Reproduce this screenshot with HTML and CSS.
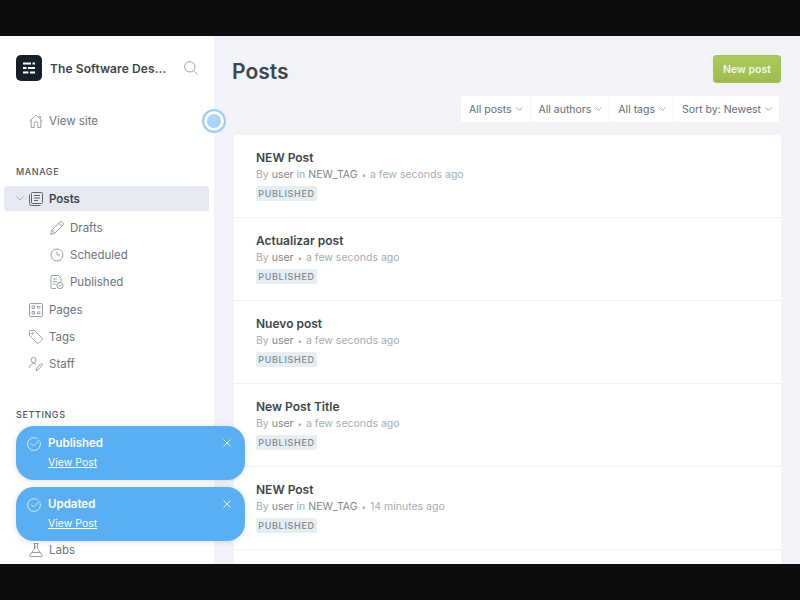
FILE: index.html
```html
<!DOCTYPE html>
<html lang="en">
<head>
    <meta charset="UTF-8">
    <title>Posts</title>
    <link rel="stylesheet" href="styles.css">
</head>
<body>
    <div class="app">
        <!-- Sidebar -->
        <aside class="sidebar">
            <div class="brand">
                <div class="logo">
                    <svg width="12" height="12" viewBox="0 0 12 12" fill="none" stroke="#fff" stroke-width="2">
                        <path d="M0 1.5h8M9.500 1.500H12M0 6h3.500M5 6h7M0 10.500h5.500M7 10.500h5"/>
                    </svg>
                </div>
                <span class="brand-name">The Software Des...</span>
                <svg class="search" width="14" height="14" viewBox="0 0 14 14" fill="none" stroke="#8e979e" stroke-width=".9">
                    <circle cx="5.800" cy="5.800" r="5.200"/>
                    <path d="M9.500 9.500l4 4"/>
                </svg>
            </div>

            <a class="nav-item view-site">
                <svg class="icon" width="14" height="14" viewBox="0 0 14 14" fill="none" stroke="#7d878f" stroke-width=".8">
                    <path d="M.5 7L7 1l6.500 6M2.200 6v7.500h3V9.500a1.800 1.800 0 0 1 3.600 0v4h3V6M10 2.500h1.500V4"/>
                </svg>
                View site
            </a>

            <h3 class="nav-title manage">Manage</h3>
            <a class="nav-item active">
                <svg class="caret" width="8" height="5" viewBox="0 0 8 5" fill="none" stroke="#9aa3aa" stroke-width=".8"><path d="M.5.500L4 4 7.500.500"/></svg>
                <svg class="icon" width="14" height="14" viewBox="0 0 14 14" fill="none" stroke="#4d565d" stroke-width=".9">
                    <rect x="2.500" y=".5" width="11" height="11" rx="1"/>
                    <path d="M5 3.500h6M5 6h6M5 8.500h4M.5 2.500v9a2 2 0 0 0 2 2h9"/>
                </svg>
                Posts
            </a>
            <a class="nav-item sub">
                <svg class="icon" width="14" height="14" viewBox="0 0 14 14" fill="none" stroke="#7d878f" stroke-width=".8">
                    <path d="M.7 13.300l1-4L10 1a1.500 1.500 0 0 1 2.200 0l.8.8a1.500 1.500 0 0 1 0 2.200l-8.300 8.300zM1.700 9.300l3 3M9 2.300l2.700 2.700"/>
                </svg>
                Drafts
            </a>
            <a class="nav-item sub">
                <svg class="icon" width="14" height="14" viewBox="0 0 14 14" fill="none" stroke="#7d878f" stroke-width=".8">
                    <circle cx="7" cy="7" r="6"/>
                    <path d="M7 3.500V7h3"/>
                </svg>
                Scheduled
            </a>
            <a class="nav-item sub">
                <svg class="icon" width="14" height="14" viewBox="0 0 14 14" fill="none" stroke="#7d878f" stroke-width=".8">
                    <path d="M6 13.500H2a1 1 0 0 1-1-1v-11a1 1 0 0 1 1-1h6.500L11 3v3.500"/>
                    <path d="M3 4h4M3 6.500h4M3 9h2.500"/>
                    <circle cx="10" cy="10.500" r="3.200"/>
                    <path d="M8.500 10.500l1.200 1 1.800-2"/>
                </svg>
                Published
            </a>
            <a class="nav-item">
                <svg class="icon" width="14" height="14" viewBox="0 0 14 14" fill="none" stroke="#7d878f" stroke-width=".8">
                    <rect x=".5" y=".5" width="13" height="13" rx="1"/>
                    <path d="M3 3h2.500v2.500H3zM3 8.500h2.500V11H3zM8 3.500h3.500M8 5h3.500M8 9h3.500M8 10.500h3.500"/>
                </svg>
                Pages
            </a>
            <a class="nav-item">
                <svg class="icon" width="14" height="14" viewBox="0 0 14 14" fill="none" stroke="#7d878f" stroke-width=".8">
                    <path d="M.5 1.500a1 1 0 0 1 1-1h4L13 8a1.200 1.200 0 0 1 0 1.700L9.700 13a1.200 1.200 0 0 1-1.700 0L.5 5.500z"/>
                    <circle cx="3.500" cy="3.500" r=".8"/>
                </svg>
                Tags
            </a>
            <a class="nav-item">
                <svg class="icon" width="14" height="14" viewBox="0 0 14 14" fill="none" stroke="#7d878f" stroke-width=".8">
                    <circle cx="4.500" cy="3" r="2.500"/>
                    <path d="M.5 11c0-2.500 1.700-4.500 4-4.500 1 0 1.800.3 2.500.8M7 13.500l.6-2.400 4.200-4.200a1 1 0 0 1 1.400 1.400L9 12.900z"/>
                </svg>
                Staff
            </a>

            <h3 class="nav-title settings">Settings</h3>
            <a class="nav-item labs">
                <svg class="icon" width="14" height="14" viewBox="0 0 14 14" fill="none" stroke="#7d878f" stroke-width=".8">
                    <path d="M4.500.5h5M5.500.5v5L1 12a1 1 0 0 0 .8 1.500h10.400A1 1 0 0 0 13 12L8.500 5.500v-5M3 9.500h8M5.500 3h1.500M5.500 5h1.500"/>
                </svg>
                Labs
            </a>
        </aside>

        <!-- Posts list -->
        <main class="content">
            <header class="page-head">
                <h1>Posts</h1>
                <button class="new-post">New post</button>
            </header>

            <div class="filters">
                <div class="filter">All posts <svg width="7" height="4" viewBox="0 0 7 4" fill="none" stroke="#8e979e" stroke-width=".8"><path d="M.5.500l3 3 3-3"/></svg></div>
                <div class="filter">All authors <svg width="7" height="4" viewBox="0 0 7 4" fill="none" stroke="#8e979e" stroke-width=".8"><path d="M.5.500l3 3 3-3"/></svg></div>
                <div class="filter">All tags <svg width="7" height="4" viewBox="0 0 7 4" fill="none" stroke="#8e979e" stroke-width=".8"><path d="M.5.500l3 3 3-3"/></svg></div>
                <div class="filter">Sort by: Newest <svg width="7" height="4" viewBox="0 0 7 4" fill="none" stroke="#8e979e" stroke-width=".8"><path d="M.5.500l3 3 3-3"/></svg></div>
            </div>

            <div class="post-list">
                <div class="post">
                    <h2>NEW Post</h2>
                    <p>By <b>user</b> in <b>NEW_TAG</b> <i>•</i> a few seconds ago</p>
                    <span class="badge">PUBLISHED</span>
                </div>
                <div class="post">
                    <h2>Actualizar post</h2>
                    <p>By <b>user</b> <i>•</i> a few seconds ago</p>
                    <span class="badge">PUBLISHED</span>
                </div>
                <div class="post">
                    <h2>Nuevo post</h2>
                    <p>By <b>user</b> <i>•</i> a few seconds ago</p>
                    <span class="badge">PUBLISHED</span>
                </div>
                <div class="post">
                    <h2>New Post Title</h2>
                    <p>By <b>user</b> <i>•</i> a few seconds ago</p>
                    <span class="badge">PUBLISHED</span>
                </div>
                <div class="post">
                    <h2>NEW Post</h2>
                    <p>By <b>user</b> in <b>NEW_TAG</b> <i>•</i> 14 minutes ago</p>
                    <span class="badge">PUBLISHED</span>
                </div>
            </div>
        </main>

        <!-- Pulse marker over the sidebar edge -->
        <div class="pulse"></div>

        <!-- Notifications -->
        <div class="toasts">
            <div class="toast">
                <svg class="toast-check" width="14" height="14" viewBox="0 0 14 14" fill="none" stroke="#d8ecfc" stroke-width="1">
                    <path d="M13 4.800A6.400 6.400 0 1 1 10.500 1.700M4 6.500l2.500 2.500L13 2.500"/>
                </svg>
                <div class="toast-body">
                    <strong>Published</strong>
                    <a>View Post</a>
                </div>
                <svg class="toast-close" width="8" height="8" viewBox="0 0 8 8" fill="none" stroke="#e6f3fe" stroke-width="1"><path d="M.5.500l7 7M7.500.500l-7 7"/></svg>
            </div>
            <div class="toast">
                <svg class="toast-check" width="14" height="14" viewBox="0 0 14 14" fill="none" stroke="#d8ecfc" stroke-width="1">
                    <path d="M13 4.800A6.400 6.400 0 1 1 10.500 1.700M4 6.500l2.500 2.500L13 2.500"/>
                </svg>
                <div class="toast-body">
                    <strong>Updated</strong>
                    <a>View Post</a>
                </div>
                <svg class="toast-close" width="8" height="8" viewBox="0 0 8 8" fill="none" stroke="#e6f3fe" stroke-width="1"><path d="M.5.500l7 7M7.500.500l-7 7"/></svg>
            </div>
        </div>
    </div>
</body>
</html>
```

FILE: styles.css
```css
html, body {
    margin: 0;
    padding: 0;
}

body {
    width: 800px;
    height: 600px;
    overflow: hidden;
    padding: 36px 0;
    box-sizing: border-box;
    background-color: #0d0d0d;
    font-family: Inter, "Liberation Sans", sans-serif;
    color: #3d464d;
}

.app {
    position: relative;
    display: flex;
    height: 528px;
    overflow: hidden;
    background-color: #f1f3f8;
}

/* Sidebar */
.sidebar {
    width: 214px;
    flex-shrink: 0;
    box-sizing: border-box;
    background-color: #fff;
    padding-top: 19px;
}

.brand {
    display: flex;
    align-items: center;
    height: 26px;
    padding-left: 16px;
}

.logo {
    display: flex;
    align-items: center;
    justify-content: center;
    width: 26px;
    height: 26px;
    border-radius: 5px;
    background-color: #15202b;
}

.brand-name {
    margin-left: 8px;
    width: 134px;
    font-size: 12px;
    font-weight: 600;
    letter-spacing: .1px;
    white-space: nowrap;
}

.nav-item {
    display: flex;
    align-items: center;
    height: 27px;
    margin: 0 4px;
    padding-left: 25px;
    font-size: 11.5px;
    color: #6b757d;
    position: relative;
}

.nav-item .icon {
    margin-right: 6px;
    flex-shrink: 0;
}

.view-site {
    margin-top: 26px;
}

.nav-title {
    margin: 0;
    padding-left: 16px;
    font-size: 9px;
    font-weight: 500;
    line-height: 12px;
    letter-spacing: .6px;
    text-transform: uppercase;
    color: #4d565d;
}

.manage {
    margin-top: 32px;
    margin-bottom: 8px;
}

.active {
    height: 25px;
    margin-right: 5px;
    margin-bottom: 3px;
    border-radius: 3px;
    background-color: #e6e9f1;
    color: #3d464d;
    font-weight: 600;
}

.caret {
    position: absolute;
    left: 12px;
    top: 10px;
}

.sub {
    padding-left: 46px;
}

.sub + .nav-item:not(.sub) {
    margin-top: 1px;
}

.settings {
    margin-top: 32px;
}

.labs {
    margin-top: 115px;
}

/* Main column */
.content {
    flex: 1;
    min-width: 0;
    display: flex;
    flex-direction: column;
    padding: 0 19px 0 18px;
}

.page-head {
    display: flex;
    align-items: center;
    justify-content: space-between;
    height: 28px;
    padding-top: 19px;
    padding-bottom: 13px;
}

h1 {
    margin: 6px 0 0;
    font-size: 21px;
    font-weight: 600;
    color: #3d464d;
    line-height: 28px;
}

.new-post {
    width: 68px;
    height: 28px;
    padding: 0;
    border: 1px solid #a3c159;
    border-radius: 3px;
    background: linear-gradient(#accb5f, #9dbb50);
    color: #f4f8e8;
    font-family: inherit;
    font-size: 10.5px;
    font-weight: 600;
}

.filters {
    display: flex;
    width: fit-content;
    height: 26px;
    margin-left: auto;
    margin-right: 2px;
    border-radius: 3px;
    background-color: #fff;
}

.filter {
    display: flex;
    align-items: center;
    gap: 4px;
    padding: 0 7px 0 8px;
    font-size: 10.5px;
    color: #626d75;
    border-left: 1px solid #f4f5f8;
    white-space: nowrap;
}

.filter:first-child {
    border-left: none;
}

.post-list {
    flex: 1;
    margin-top: 13px;
    margin-left: 2px;
    border-radius: 3px 3px 0 0;
    background-color: #fff;
}

.post {
    height: 82px;
    padding-left: 22px;
    border-bottom: 1px solid #eef1f4;
    overflow: hidden;
}

.post h2 {
    margin: 16px 0 0;
    font-size: 12px;
    font-weight: 600;
    line-height: 14px;
    color: #3d464d;
}

.post p {
    margin: 3px 0 0;
    font-size: 10.5px;
    line-height: 13px;
    color: #a4adb4;
}

.post b {
    font-weight: 400;
    color: #7d878f;
}

.post i {
    font-style: normal;
    font-size: 8px;
    margin: 0 1px;
}

.badge {
    display: block;
    width: 61px;
    height: 15px;
    margin-top: 4px;
    text-align: center;
    line-height: 15px;
    border-radius: 2px;
    background-color: #e6eef4;
    color: #7d878f;
    font-size: 9px;
    font-weight: 500;
    letter-spacing: .7px;
}

/* Floating bits */
.pulse {
    position: absolute;
    left: 202px;
    top: 73px;
    width: 14px;
    height: 14px;
    padding: 3px;
    border: 2px solid #9ccff8;
    border-radius: 50%;
    background-color: #a9d6fa;
    box-shadow: inset 0 0 0 3px #fff;
}

.toasts {
    position: absolute;
    left: 16px;
    top: 390px;
    display: flex;
    flex-direction: column;
    gap: 7px;
}

.toast {
    position: relative;
    display: flex;
    width: 229px;
    height: 54px;
    box-sizing: border-box;
    padding: 10px 0 0 11px;
    border-radius: 18px;
    background-color: #5aaef2;
    box-shadow: 0 1px 6px rgba(0, 0, 0, .12);
    color: #fff;
}

.toast-check {
    margin-top: 1px;
    flex-shrink: 0;
}

.toast-body {
    display: flex;
    flex-direction: column;
    margin-left: 7px;
}

.toast-body strong {
    font-size: 11.5px;
    font-weight: 600;
    line-height: 14px;
}

.toast-body a {
    margin-top: 6px;
    font-size: 10.5px;
    line-height: 14px;
    text-decoration: underline;
}

.toast-close {
    position: absolute;
    right: 14px;
    top: 13px;
}
```
